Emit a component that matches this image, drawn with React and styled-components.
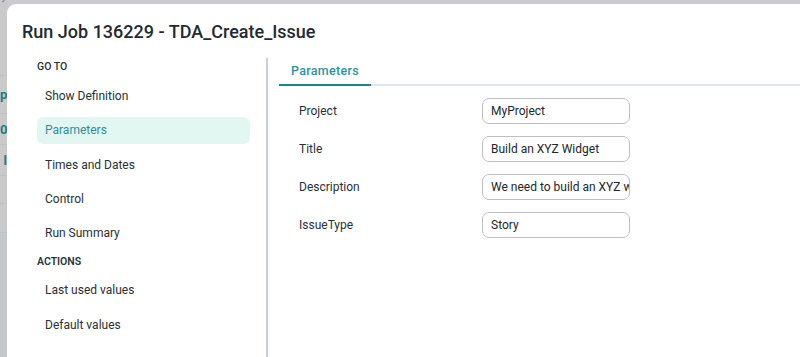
import React from "react";
import styled, { createGlobalStyle } from "styled-components";

const GlobalStyle = createGlobalStyle`
  html, body {
    margin: 0;
    padding: 0;
    background: #c9cbce;
  }
  * {
    box-sizing: border-box;
  }
`;

const Page = styled.div`
  width: 800px;
  height: 357px;
  overflow: hidden;
  display: flex;
  background: #c9cbce;
  font-family: Roboto, "Liberation Sans", sans-serif;
`;

const Backdrop = styled.div`
  width: 7px;
  flex-shrink: 0;
  display: flex;
  flex-direction: column;
  padding-top: 4px;
  position: relative;
`;

const Check = styled.span`
  position: absolute;
  top: -3px;
  left: 1px;
  font-size: 7px;
  color: #777;
`;

const BackRow = styled.div`
  height: ${(p) => p.h}px;
  border-bottom: 1px solid #bfc1c4;
  background: #cacaca;
  color: #1b7d8c;
  font-weight: 700;
  font-size: 13px;
  line-height: ${(p) => p.h}px;
  white-space: nowrap;
  text-align: right;
  overflow: hidden;
`;

const BackRest = styled.div`
  flex: 1;
  background: #c4c8cc;
`;

const Modal = styled.div`
  flex: 1;
  margin-top: 4px;
  background: #ffffff;
  border-top-left-radius: 9px;
  display: flex;
  flex-direction: column;
`;

const Title = styled.h1`
  margin: 0;
  padding: 17px 0 0 15px;
  height: 54px;
  font-size: 18px;
  font-weight: 500;
  color: #1f2a32;
`;

const Body = styled.div`
  flex: 1;
  display: grid;
  grid-template-columns: 259px 1fr;
`;

const Sidebar = styled.nav`
  padding: 0 16px 0 30px;
  display: flex;
  flex-direction: column;
`;

const SectionLabel = styled.div`
  font-size: 10.5px;
  font-weight: ${(p) => (p.strong ? 600 : 500)};
  color: #2b3238;
  height: 17px;
  line-height: 17px;
  margin-top: ${(p) => p.top || 0}px;
  margin-bottom: ${(p) => p.gap}px;
  text-transform: uppercase;
`;

const NavItem = styled.div`
  height: 27px;
  line-height: 27px;
  padding-left: 8px;
  margin-bottom: 7.25px;
  font-size: 12px;
  border-radius: 6px;
  color: ${(p) => (p.active ? "#2d8f9c" : "#2a3036")};
  background: ${(p) => (p.active ? "#e3f7f2" : "transparent")};
`;

const Content = styled.section`
  border-left: 2px solid #c9cdd8;
  padding-left: 11px;
`;

const TabBar = styled.div`
  display: flex;
  border-bottom: 2px solid #dce6f3;
`;

const Tab = styled.div`
  padding: 0 12px;
  height: 28px;
  line-height: 26px;
  margin-bottom: -2px;
  font-size: 12.5px;
  font-weight: 500;
  letter-spacing: 0.3px;
  color: ${(p) => (p.active ? "#2b93a0" : "#556")};
  border-bottom: 2px solid ${(p) => (p.active ? "#1a8593" : "transparent")};
`;

const Form = styled.div`
  display: grid;
  grid-template-columns: 183px 148px;
  row-gap: 12px;
  padding: 12px 0 0 20px;
  align-items: center;
`;

const Label = styled.label`
  font-size: 12px;
  color: #2a3036;
`;

const Field = styled.div`
  height: 26px;
  line-height: 24px;
  border: 1px solid #bcbfc6;
  border-radius: 7px;
  padding: 0 8px;
  font-size: 12px;
  color: #1e252b;
  white-space: nowrap;
  overflow: hidden;
`;

const backRows = [
  { h: 72, t: "" },
  { h: 38, t: "p" },
  { h: 31, t: "01" },
  { h: 31, t: "l" },
  { h: 28, t: "" },
  { h: 29, t: "" },
];

const params = [
  ["Project", "MyProject"],
  ["Title", "Build an XYZ Widget"],
  ["Description", "We need to build an XYZ widget for the team"],
  ["IssueType", "Story"],
];

export default function App() {
  return (
    <>
      <GlobalStyle />
      <Page>
        <Backdrop>
          <Check>✓</Check>
          {backRows.map((r, i) => (
            <BackRow key={i} h={r.h}>
              {r.t}
            </BackRow>
          ))}
          <BackRest />
        </Backdrop>
        <Modal>
          <Title>Run Job 136229 - TDA_Create_Issue</Title>
          <Body>
            <Sidebar>
              <SectionLabel gap={8}>Go To</SectionLabel>
              <NavItem>Show Definition</NavItem>
              <NavItem active>Parameters</NavItem>
              <NavItem>Times and Dates</NavItem>
              <NavItem>Control</NavItem>
              <NavItem>Run Summary</NavItem>
              <SectionLabel strong top={-1} gap={7}>
                Actions
              </SectionLabel>
              <NavItem>Last used values</NavItem>
              <NavItem>Default values</NavItem>
            </Sidebar>
            <Content>
              <TabBar>
                <Tab active>Parameters</Tab>
              </TabBar>
              <Form>
                {params.map(([k, v]) => (
                  <React.Fragment key={k}>
                    <Label>{k}</Label>
                    <Field>{v}</Field>
                  </React.Fragment>
                ))}
              </Form>
            </Content>
          </Body>
        </Modal>
      </Page>
    </>
  );
}
